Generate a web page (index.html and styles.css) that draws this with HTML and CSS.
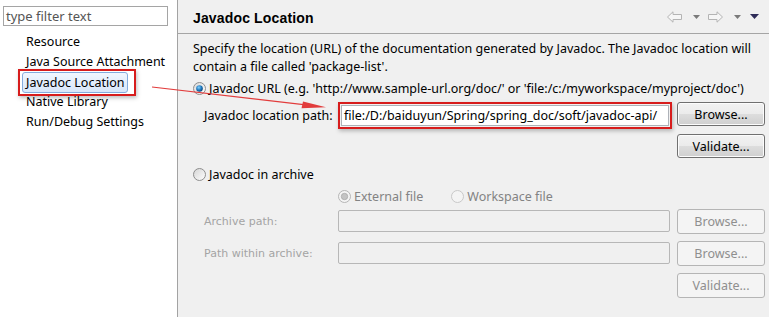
FILE: index.html
```html
<!DOCTYPE html>
<html>
<head>
<meta charset="utf-8">
<link rel="stylesheet" href="styles.css">
</head>
<body>
<div class="app">
  <aside class="side">
    <div class="filter">type filter text</div>
    <ul class="tree">
      <li>Resource</li>
      <li>Java Source Attachment</li>
      <li class="selrow"><span class="sel">Javadoc Location</span><span class="mark"></span></li>
      <li>Native Library</li>
      <li>Run/Debug Settings</li>
    </ul>
  </aside>
  <main class="pane">
    <header class="head">
      <h1 class="title">Javadoc Location</h1>
      <div class="nav">
        <svg width="15" height="12" viewBox="0 0 15 12"><path d="M0.5 6 L6 0.8 L6 3.5 L14.5 3.5 L14.5 8.5 L6 8.5 L6 11.2 Z" fill="#f6f6f6" stroke="#b4b4b4" stroke-width="1"/></svg>
        <svg class="dd" width="7" height="4" viewBox="0 0 7 4"><path d="M0 0 H7 L3.5 4 Z" fill="#7a7a7a"/></svg>
        <svg class="fwd" width="15" height="12" viewBox="0 0 15 12"><path d="M14.5 6 L9 0.8 L9 3.5 L0.5 3.5 L0.5 8.5 L9 8.5 L9 11.2 Z" fill="#f6f6f6" stroke="#b4b4b4" stroke-width="1"/></svg>
        <svg class="dd" width="7" height="4" viewBox="0 0 7 4"><path d="M0 0 H7 L3.5 4 Z" fill="#7a7a7a"/></svg>
        <svg class="menu" width="9" height="5" viewBox="0 0 9 5"><path d="M0 0 H9 L4.5 5 Z" fill="#2e2c58"/></svg>
      </div>
    </header>
    <section class="body">
      <p class="desc">Specify the location (URL) of the documentation generated by Javadoc. The Javadoc location will contain a file called 'package-list'.</p>
      <div class="radio r-url">
        <svg width="13" height="13" viewBox="0 0 13 13"><defs><radialGradient id="dot" cx="0.4" cy="0.35" r="0.7"><stop offset="0" stop-color="#7fd0ff"/><stop offset="0.6" stop-color="#1b73b8"/><stop offset="1" stop-color="#0c3f6e"/></radialGradient><linearGradient id="ring" x1="0" y1="0" x2="1" y2="1"><stop offset="0" stop-color="#d8d8d8"/><stop offset="1" stop-color="#ffffff"/></linearGradient></defs><circle cx="6.5" cy="6.5" r="6" fill="url(#ring)" stroke="#8d8d8d"/><circle cx="6.5" cy="6.5" r="3.3" fill="url(#dot)"/></svg>
        <span>Javadoc URL (e.g. 'http://www.sample-url.org/doc/' or 'file:/c:/myworkspace/myproject/doc')</span>
      </div>
      <div class="form">
        <span class="lbl">Javadoc location path:</span>
        <div class="redbox"><div class="field">file:/D:/baiduyun/Spring/spring_doc/soft/javadoc-api/</div></div>
        <button class="btn">Browse...</button>
        <button class="btn c3">Validate...</button>
      </div>
      <div class="radio r-arch">
        <svg width="13" height="13" viewBox="0 0 13 13"><defs><linearGradient id="ring2" x1="0" y1="0" x2="1" y2="1"><stop offset="0" stop-color="#d4d4d4"/><stop offset="1" stop-color="#ffffff"/></linearGradient></defs><circle cx="6.5" cy="6.5" r="6" fill="url(#ring2)" stroke="#8d8d8d"/></svg>
        <span>Javadoc in archive</span>
      </div>
      <div class="form dis">
        <div class="kind">
          <span class="radio sub"><svg width="13" height="13" viewBox="0 0 13 13"><circle cx="6.5" cy="6.5" r="6" fill="#f4f4f4" stroke="#b5b5b5"/><circle cx="6.5" cy="6.5" r="3.2" fill="#c4c4c4" stroke="#a9a9a9" stroke-width="0.8"/></svg><span>External file</span></span>
          <span class="radio sub ws"><svg width="13" height="13" viewBox="0 0 13 13"><circle cx="6.5" cy="6.5" r="6" fill="#f4f4f4" stroke="#c8c8c8"/></svg><span>Workspace file</span></span>
        </div>
        <span class="lbl dl r2">Archive path:</span>
        <div class="dfield r2"></div>
        <button class="btn off r2" disabled>Browse...</button>
        <span class="lbl dl r3">Path within archive:</span>
        <div class="dfield r3"></div>
        <button class="btn off r3" disabled>Browse...</button>
        <button class="btn off r4" disabled>Validate...</button>
      </div>
    </section>
  </main>
  <svg class="arrow" width="769" height="317" viewBox="0 0 769 317">
    <line x1="152" y1="87" x2="310" y2="105.3" stroke="#e23c3c" stroke-width="1.2"/>
    <path d="M326 107.2 L303 101.5 L301.5 108.3 Z" fill="#e23c3c"/>
  </svg>
</div>
</body>
</html>
```
FILE: styles.css
```css
html, body {
  margin: 0;
  padding: 0;
}
body {
  width: 769px;
  height: 317px;
  overflow: hidden;
  background: #f0f0f0;
  font-family: "Noto Sans", "Open Sans", sans-serif;
  font-size: 12.5px;
  color: #000;
}
.app {
  position: relative;
  display: flex;
  height: 317px;
}
.side {
  width: 177px;
  flex: none;
  background: #fff;
  border-right: 1px solid #a3a3a3;
}
.filter {
  margin: 6px 0 0 3px;
  width: 161px;
  height: 18px;
  border: 1px solid #a5a5a5;
  color: #555;
  font-size: 13px;
  line-height: 18px;
  padding-left: 2px;
  box-sizing: content-box;
}
.tree {
  list-style: none;
  margin: 6px 0 0 0;
  padding: 0;
}
.tree li {
  height: 20px;
  line-height: 20px;
  padding-left: 26px;
  font-size: 12.5px;
  white-space: nowrap;
}
.tree li.selrow {
  position: relative;
  padding-left: 22px;
}
.sel {
  display: inline-block;
  height: 19px;
  line-height: 19px;
  padding: 0 3px;
  border: 1px solid #84acdd;
  border-radius: 3px;
  background: linear-gradient(#f1f7fe, #d7e6f9);
}
.mark {
  position: absolute;
  left: 18px;
  top: -3px;
  width: 114px;
  height: 23px;
  border: 2px solid #d71c1c;
  box-shadow: 1px 2px 4px rgba(0,0,0,0.25);
}
.pane {
  flex: 1;
  min-width: 0;
}
.head {
  height: 33px;
  border-bottom: 1px solid #a5a5a5;
  display: flex;
  align-items: center;
  padding: 0 10px 0 15px;
}
.title {
  margin: 0;
  font-family: "Liberation Sans", Arial, sans-serif;
  font-weight: bold;
  font-size: 14px;
  letter-spacing: 0.15px;
  flex: 1;
  position: relative;
  top: 1px;
}
.nav {
  display: flex;
  align-items: center;
}
.nav .dd {
  margin-left: 11px;
}
.nav .fwd {
  margin-left: 8px;
}
.nav .menu {
  margin-left: 9px;
}
.body {
  padding: 6px 4px 0 15px;
}
.desc {
  margin: 0;
  line-height: 18px;
  width: 572px;
}
.radio {
  display: flex;
  align-items: center;
  height: 18px;
  gap: 3px;
}
.radio svg {
  flex: none;
}
.r-url {
  margin-top: 3px;
}
.form {
  display: grid;
  grid-template-columns: 140px 334px 88px;
  column-gap: 5px;
  margin-top: 5px;
}
.form .lbl {
  padding-left: 11px;
  align-self: center;
  white-space: nowrap;
}
.redbox {
  border: 2px solid #d71c1c;
  box-shadow: 1px 2px 4px rgba(0,0,0,0.25);
  height: 23px;
  width: 330px;
}
.field {
  height: 21px;
  margin: 1px;
  background: #fff;
  border: 1px solid #aeb2b8;
  line-height: 19px;
  padding-left: 2px;
  white-space: nowrap;
  overflow: hidden;
  width: 328px;
  box-sizing: border-box;
}
.btn {
  height: 24px;
  width: 88px;
  margin: 0;
  padding: 0;
  font-family: "Noto Sans", "Open Sans", sans-serif;
  font-size: 12.5px;
  color: #000;
  border: 1px solid #707070;
  border-radius: 3px;
  background: linear-gradient(#f2f2f2 0%, #ebebeb 50%, #dddddd 51%, #cfcfcf 100%);
  box-shadow: inset 0 0 0 1px #fcfcfc;
  align-self: start;
}
.c3 {
  grid-column: 3;
  margin-top: 5px;
}
.r-arch {
  margin-top: 7px;
}
.dis {
  margin-top: 4px;
  row-gap: 7px;
}
.kind {
  grid-column: 2 / 4;
  display: flex;
  height: 18px;
  margin-bottom: -3px;
}
.sub {
  color: #838383;
}
.ws {
  margin-left: 28px;
}
.dl {
  font-family: "DejaVu Sans", sans-serif;
  font-size: 11px;
  color: #a4a4a4;
  grid-column: 1;
}
.dfield {
  grid-column: 2;
  height: 22px;
  margin-top: 1px;
  width: 332px;
  border: 1px solid #b7b7b7;
  border-radius: 2px;
  box-sizing: border-box;
  background: #f0f0f0;
}
.btn.off {
  height: 25px;
  grid-column: 3;
  color: #8f8f8f;
  border-color: #b5b5b5;
  background: #f4f4f4;
  box-shadow: none;
}
.r2 { grid-row: 2; }
.r3 { grid-row: 3; }
.r4 { grid-row: 4; }
.arrow {
  position: absolute;
  left: 0;
  top: 0;
  pointer-events: none;
}
```
